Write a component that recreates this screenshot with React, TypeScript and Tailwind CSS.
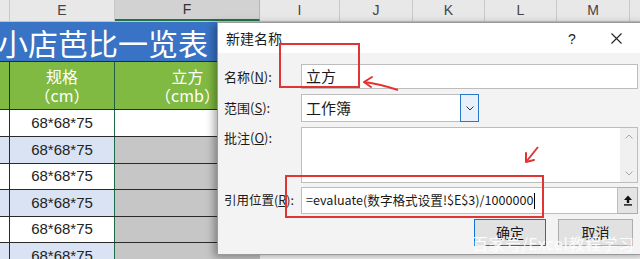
import React from "react";

const cjk = "font-['Microsoft_YaHei','Noto_Sans_CJK_SC',sans-serif]";

function HeaderCell({ w, label, cls = "" }: { w: string; label: string; cls?: string }) {
  return (
    <div className={`${w} h-full shrink-0 border-r border-[#c8c8c8] flex items-center justify-center text-[14px] text-[#444] ${cls}`}>
      {label}
    </div>
  );
}

export default function App() {
  const heights = ["h-[27px]", "h-[27px]", "h-[26px]", "h-[27px]", "h-[26px]", "h-[27px]"];
  return (
    <div className={`relative w-[640px] h-[259px] overflow-hidden bg-white font-['Liberation_Sans',sans-serif]`}>
      {/* column header */}
      <div className="flex h-[22px] bg-[#e8e8e8] border-b border-[#c4c4c4]">
        <HeaderCell w="w-[10px]" label="" />
        <HeaderCell w="w-[105px]" label="E" />
        <div className="w-[145px] h-full shrink-0 bg-[#d2d2d2] border-r border-[#b5b5b5] border-b-2 border-b-[#217346] flex items-center justify-center text-[14px] text-[#333]">F</div>
        <HeaderCell w="w-[80px]" label="I" />
        <HeaderCell w="w-[73px]" label="J" />
        <HeaderCell w="w-[72px]" label="K" />
        <HeaderCell w="w-[72px]" label="L" />
        <HeaderCell w="w-[73px]" label="M" />
        <div className="flex-1" />
      </div>

      {/* title row */}
      <div className={`h-[40px] bg-[#3873c5] border-b border-[#2a2a2a] flex items-center overflow-hidden ${cjk}`}>
        <span className="text-white text-[30px] leading-none ml-[-2px] whitespace-nowrap">小店芭比一览表</span>
      </div>

      {/* green header row */}
      <div className={`flex h-[48px] bg-[#80ba42] border-b border-[#2a2a2a] text-white text-[16px] leading-[19px] ${cjk}`}>
        <div className="w-[10px] shrink-0 border-r border-[#2a2a2a]" />
        <div className="w-[105px] shrink-0 border-r border-[#1f5f3f] flex flex-col items-center justify-center">
          <span>规格</span>
          <span>（cm）</span>
        </div>
        <div className="w-[145px] shrink-0 flex flex-col items-center justify-center">
          <span>立方</span>
          <span>（cmb）</span>
        </div>
        <div className="flex-1" />
      </div>

      {/* data rows */}
      {heights.map((h, i) => {
        const blue = i % 2 === 1;
        return (
          <div key={i} className={`flex ${h} border-b border-[#2a2a2a]`}>
            <div className={`w-[10px] shrink-0 border-r border-[#2a2a2a] ${blue ? "bg-[#d9e3f3]" : "bg-white"}`} />
            <div className={`w-[105px] shrink-0 border-r border-[#1f6b46] flex items-center justify-center text-[15px] text-[#222] ${blue ? "bg-[#d9e3f3]" : "bg-white"}`}>
              68*68*75
            </div>
            <div className={`w-[145px] shrink-0 ${i === 0 ? "bg-white" : "bg-[#c6c6c6]"}`} />
            <div className="flex-1 bg-white" />
          </div>
        );
      })}

      {/* dialog */}
      <div className={`absolute left-[217px] top-[22px] w-[430px] h-[233px] bg-[#f3f3f3] border border-[#9a9a9a] shadow-[-3px_2px_8px_rgba(0,0,0,0.35)] flex flex-col text-[13px] text-[#1a1a1a] ${cjk}`}>
        <div className="h-[30px] bg-white flex items-center pl-[8px] shrink-0 relative">
          <span className="text-[14px]">新建名称</span>
          <span className="absolute left-[350px] top-[6px] text-[14px] font-['Liberation_Sans',sans-serif] text-[#222]">?</span>
          <svg className="absolute left-[393px] top-[10px]" width="11" height="11" viewBox="0 0 11 11">
            <path d="M0.5 0.5 L10.5 10.5 M10.5 0.5 L0.5 10.5" stroke="#222" strokeWidth="1.1" />
          </svg>
        </div>

        <div className="flex flex-col pl-[6px] pr-[8px]">
          {/* name */}
          <div className="flex items-center mt-[11px]">
            <div className="w-[77px] shrink-0">名称(<span className="underline">N</span>):</div>
            <div className="flex-1 h-[25px] bg-white border border-[#bdbdbd] flex items-center pl-[4px] text-[15px]">立方</div>
          </div>
          {/* scope */}
          <div className="flex items-center mt-[5px]">
            <div className="w-[77px] shrink-0">范围(<span className="underline">S</span>):</div>
            <div className="w-[178px] h-[28px] bg-white border border-[#bdbdbd] flex items-center pl-[4px] text-[15px] relative">
              工作簿
              <div className="absolute right-[-1px] top-[-1px] w-[19px] h-[28px] border border-[#2a78c8] bg-[#e8f1fb] flex items-center justify-center">
                <svg width="8" height="5" viewBox="0 0 8 5"><path d="M0.5 0.5 L4 4 L7.5 0.5" stroke="#333" strokeWidth="1" fill="none" /></svg>
              </div>
            </div>
          </div>
          {/* comment */}
          <div className="flex items-start mt-[5px]">
            <div className="w-[77px] shrink-0 pt-[1px]">批注(<span className="underline">O</span>):</div>
            <div className="flex-1 h-[56px] bg-white border border-[#bdbdbd] flex justify-end">
              <div className="w-[17px] h-full bg-[#f0f0f0] flex flex-col items-center justify-between py-[6px]">
                <svg width="8" height="5" viewBox="0 0 8 5"><path d="M0.5 4.5 L4 1 L7.5 4.5" stroke="#a6a6a6" strokeWidth="1" fill="none" /></svg>
                <svg width="8" height="5" viewBox="0 0 8 5"><path d="M0.5 0.5 L4 4 L7.5 0.5" stroke="#a6a6a6" strokeWidth="1" fill="none" /></svg>
              </div>
            </div>
          </div>
          {/* reference */}
          <div className="flex items-center mt-[4px]">
            <div className="w-[77px] shrink-0 whitespace-nowrap text-[12.5px]">引用位置(<span className="underline">R</span>):</div>
            <div className="flex-1 h-[27px] bg-white border border-[#bdbdbd] flex items-center pl-[4px] text-[12.6px] whitespace-nowrap">
              =evaluate(数字格式设置!$E$3)/1000000
              <span className="inline-block w-[1px] h-[16px] bg-black ml-[1px]" />
            </div>
            <div className="w-[20px] h-[27px] bg-[#e4e4e4] border border-[#adadad] border-l-0 flex items-center justify-center">
              <svg width="10" height="11" viewBox="0 0 10 11">
                <path d="M5 0.5 L9 5 L6.2 5 L6.2 8 L3.8 8 L3.8 5 L1 5 Z" fill="#111" />
                <rect x="1" y="9.2" width="8" height="1.4" fill="#111" />
              </svg>
            </div>
          </div>
          {/* buttons */}
          <div className="flex mt-[5px] pl-[250px] gap-[12px]">
            <div className="w-[72px] h-[27px] bg-[#e1e1e1] border border-[#0a74d8] flex items-center justify-center text-[14px]">确定</div>
            <div className="w-[75px] h-[27px] bg-[#e1e1e1] border border-[#adadad] flex items-center justify-center text-[14px]">取消</div>
          </div>
        </div>
      </div>

      {/* watermark */}
      <div className={`absolute left-[472px] top-[231px] text-[16px] text-white opacity-90 tracking-[0.5px] whitespace-nowrap ${cjk}`}>
        百家号/Excel教程学习
      </div>

      {/* annotations */}
      <div className="absolute left-[279px] top-[43px] w-[81px] h-[45px] border-2 border-[#e23434]" />
      <div className="absolute left-[285px] top-[175px] w-[259px] h-[43px] border-2 border-[#e23434]" />
      <svg className="absolute left-0 top-0" width="640" height="259" viewBox="0 0 640 259">
        <path d="M398 90 Q380 84 364 82" stroke="#e23434" strokeWidth="2" fill="none" />
        <path d="M364 82 L372 77 M364 82 L371 87" stroke="#e23434" strokeWidth="2" fill="none" strokeLinecap="round" />
        <path d="M538 147 L526 162" stroke="#e23434" strokeWidth="2" fill="none" />
        <path d="M526 162 L526 153 M526 162 L534 160" stroke="#e23434" strokeWidth="2" fill="none" strokeLinecap="round" />
      </svg>
    </div>
  );
}
